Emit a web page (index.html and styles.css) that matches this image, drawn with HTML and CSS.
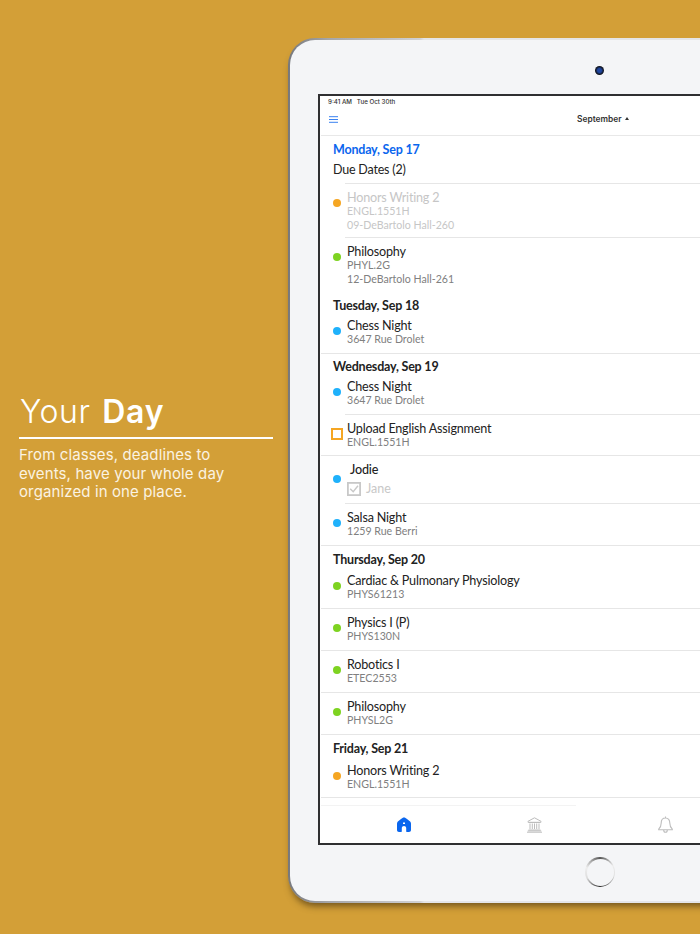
FILE: index.html
```html
<!DOCTYPE html>
<html lang="en">
<head>
<meta charset="utf-8">
<title>Your Day</title>
<link rel="stylesheet" href="styles.css">
</head>
<body>
<main class="page">
  <section class="promo">
    <h1 class="promo-title">Your <b>Day</b></h1>
    <p class="promo-text">From classes, deadlines to events, have your whole day organized in one place.</p>
  </section>
  <section class="tablet">
    <div class="bezel">
      <div class="camera-row"><span class="camera"></span></div>
      <div class="screen">
        <div class="status">9:41 AM&nbsp;&nbsp; Tue Oct 30th</div>
        <header class="nav">
          <svg class="menu" width="9" height="7" viewBox="0 0 9 7"><path d="M0 .7h9M0 3.500h9M0 6.300h9" stroke="#3b82f0" stroke-width="1"/></svg>
          <span class="month">September <i class="caret"></i></span>
        </header>
        <div class="list">
          <h2 class="day today">Monday, Sep 17</h2>
          <div class="due">Due Dates (2)</div>
          <div class="row tall muted"><span class="dot orange"></span><div class="info rule"><div class="title">Honors Writing 2</div><div class="sub">ENGL.1551H</div><div class="sub">09-DeBartolo Hall-260</div></div></div>
          <div class="row tall"><span class="dot green"></span><div class="info"><div class="title">Philosophy</div><div class="sub">PHYL.2G</div><div class="sub">12-DeBartolo Hall-261</div></div></div>
          <h2 class="day day-short">Tuesday, Sep 18</h2>
          <div class="row full"><span class="dot blue"></span><div class="info"><div class="title">Chess Night</div><div class="sub">3647 Rue Drolet</div></div></div>
          <h2 class="day day-tight">Wednesday, Sep 19</h2>
          <div class="row"><span class="dot blue"></span><div class="info rule"><div class="title">Chess Night</div><div class="sub">3647 Rue Drolet</div></div></div>
          <div class="row short full"><span class="box"></span><div class="info"><div class="title">Upload English Assignment</div><div class="sub">ENGL.1551H</div></div></div>
          <div class="row jodie"><span class="dot blue dot-low"></span><div class="info rule"><div class="title name">Jodie</div><div class="check-line">
            <svg width="14" height="14" viewBox="0 0 14 14"><rect x=".9" y=".9" width="12.200" height="12.200" fill="none" stroke="#c8c8c8" stroke-width="1.800"/><path d="M3.200 6.800l3 3 4.800-6" fill="none" stroke="#c8c8c8" stroke-width="1.400"/></svg>
            <span>Jane</span></div></div></div>
          <div class="row full"><span class="dot blue"></span><div class="info"><div class="title">Salsa Night</div><div class="sub">1259 Rue Berri</div></div></div>
          <h2 class="day">Thursday, Sep 20</h2>
          <div class="row full"><span class="dot green"></span><div class="info"><div class="title">Cardiac &amp; Pulmonary Physiology</div><div class="sub">PHYS61213</div></div></div>
          <div class="row full"><span class="dot green"></span><div class="info"><div class="title">Physics I (P)</div><div class="sub">PHYS130N</div></div></div>
          <div class="row full"><span class="dot green"></span><div class="info"><div class="title">Robotics I</div><div class="sub">ETEC2553</div></div></div>
          <div class="row full"><span class="dot green"></span><div class="info"><div class="title">Philosophy</div><div class="sub">PHYSL2G</div></div></div>
          <h2 class="day day-tall">Friday, Sep 21</h2>
          <div class="row short full"><span class="dot orange"></span><div class="info"><div class="title">Honors Writing 2</div><div class="sub">ENGL.1551H</div></div></div>
          <div class="faint"></div>
        </div>
        <nav class="tabs">
          <span class="tab"><svg width="14" height="15" viewBox="0 0 14 15"><path fill="#0a66ee" fill-rule="evenodd" d="M7 .5C8 .5 9 1.200 10 2l2.500 2c1 .8 1.500 1.600 1.500 3v6c0 1.200-.8 2-2 2h-2c-.6 0-.8-.4-.8-1v-3c0-1.200-1-2-2.200-2s-2.200.8-2.200 2v3c0 .6-.2 1-.8 1H2c-1.200 0-2-.8-2-2V7c0-1.400.5-2.200 1.500-3L4 2C5 1.200 6 .5 7 .5zM6 5.500h2V7H6z"/></svg></span>
          <span class="tab"><svg width="17" height="16" viewBox="0 0 17 16"><g fill="none" stroke="#bdbdbd" stroke-width="1"><path d="M8.500.8L15 4.300v1H2v-1zM3 5.500h11M2.500 13h12M1 15.200h15M1.800 13.900h13.400M4 6.500V12M6.300 6.500V12M8.500 6.500V12M10.700 6.500V12M13 6.500V12"/></g></svg></span>
          <span class="tab"><svg width="15" height="17" viewBox="0 0 15 17"><g fill="none" stroke="#bdbdbd" stroke-width="1.100"><path d="M7.500 2C4.700 2 3.200 4 3.200 7c0 3-.8 4.500-2.500 6.200v.6h13.600v-.6C12.600 11.500 11.800 10 11.800 7c0-3-1.500-5-4.300-5zM7.500 2V.5M5.700 14c0 1.500.8 2.300 1.800 2.300s1.800-.8 1.800-2.300"/></g></svg></span>
        </nav>
      </div>
      <div class="home-row"><span class="home"></span></div>
    </div>
  </section>
</main>
</body>
</html>
```
FILE: styles.css
```css
* { box-sizing: border-box; }
html, body { margin: 0; padding: 0; }
body { width: 700px; height: 934px; overflow: hidden; background: #d39f37; }
.page { display: flex; width: 700px; height: 934px; overflow: hidden; }

.promo { flex: 0 0 288px; padding: 393px 15px 0 19px; color: #fff; font-family: Inter, sans-serif; }
.promo-title { margin: 0; padding: 0 0 6px 1px; border-bottom: 2px solid #fff; font-size: 32px; line-height: 38px; font-weight: 300; letter-spacing: .6px; word-spacing: 2px; }
.promo-title b { font-weight: 600; letter-spacing: .8px; }
.promo-text { max-width: 212px; margin: 7px 0 0; font-size: 15px; line-height: 18.500px; font-weight: 400; color: #fbf3e2; letter-spacing: .12px; }

.tablet { flex: 0 0 520px; height: 865px; margin-top: 38px; padding: 2px 0 2px 2px; border-radius: 27px 0 0 27px; background: linear-gradient(90deg, #77787c 0, #a5a6a9 40px, #d0d1d4 132px, #e4e5e8 136px); box-shadow: 0 6px 7px -3px rgba(70, 50, 15, .7); }
.bezel { height: 100%; background: #f4f5f7; border-radius: 25px 0 0 25px; display: flex; flex-direction: column; }
.camera-row { height: 54px; padding: 26px 0 0 305px; }
.camera { display: block; width: 9px; height: 9px; border-radius: 50%; background: radial-gradient(circle, #1f46a0 0 30%, #10141f 62%); }
.screen { height: 751px; margin-left: 28px; border: 2px solid #2f2f31; border-right: 0; background: #fff; display: flex; flex-direction: column; font-family: Lato, sans-serif; color: #222; }
.status { height: 11px; padding: 1px 0 0 8px; font: 500 6.200px/10px Inter, sans-serif; color: #333; }
.nav { height: 29px; flex: none; margin-left: 1px; border-bottom: 1px solid #e8e8e8; padding-left: 8px; display: flex; align-items: center; gap: 239px; }
.menu { margin-top: -4px; }
.month { margin-top: -4px; font: 600 8.400px/12px Inter, sans-serif; color: #333; }
.caret { display: inline-block; width: 0; height: 0; border: 2.500px solid transparent; border-top: 0; border-bottom: 3px solid #333; vertical-align: 2px; margin-left: 1px; }

.list { flex: none; height: 670px; margin-left: 1px; overflow: hidden; }
.day { margin: 0; height: 21px; padding: 6px 0 0 12px; font-size: 12.500px; line-height: 16px; font-weight: 700; letter-spacing: -.2px; color: #222; }
.day-short { height: 20px; }
.day-tight { height: 19px; padding-top: 5px; }
.day-tall { height: 22px; }
.today { height: 23px; color: #0a66ee; }
.due { height: 25px; padding: 3px 0 0 12px; font-size: 12.500px; line-height: 16px; letter-spacing: -.2px; color: #222; background: linear-gradient(#e6e6e6, #e6e6e6) 24px 100% / 100% 1px no-repeat; }
.row { display: flex; height: 42px; padding-left: 12px; gap: 4px; }
.row.tall { height: 54px; }
.row.jodie { height: 48px; }
.row.short { height: 41px; }
.row.full { border-bottom: 1px solid #e6e6e6; }
.info { flex: 1; min-width: 0; padding: 6px 0 0 2px; }
.info.rule { border-bottom: 1px solid #e6e6e6; }
.dot { flex: none; width: 8px; height: 8px; margin-top: 15px; border-radius: 50%; }
.dot-low { margin-top: 19px; }
.green { background: #7ed321; }
.orange { background: #f5a623; }
.blue { background: #1fb1fb; }
.box { flex: none; width: 12px; height: 12px; margin: 13px -2px 0 -2px; border: 2px solid #f5a623; }
.title { font-size: 12.600px; line-height: 15px; letter-spacing: -.2px; color: #222; }
.sub { font-size: 10.600px; line-height: 13.500px; color: #808080; }
.muted .title, .muted .sub { color: #c6c6c6; }
.name { font-weight: 500; margin-left: 3px; }
.check-line { display: flex; align-items: center; gap: 5px; margin-top: 4px; font-size: 12.500px; line-height: 15px; color: #c8c8c8; }
.faint { height: 1px; width: 255px; margin-top: 7px; background: #f3f3f3; }
.tabs { flex: none; height: 37px; padding: 0 0 0 18.750px; display: flex; align-items: center; background: #fff; }
.tab { flex: 0 0 130.500px; display: flex; justify-content: center; }
.home-row { height: 56px; padding: 12px 0 0 295px; }
.home { display: block; width: 30px; height: 30px; padding: 1.500px; border-radius: 50%; background: conic-gradient(#555, #eee 18%, #ddd 30%, #222 50%, #ddd 68%, #eee 80%, #555); }
.home::after { content: ""; display: block; width: 100%; height: 100%; border-radius: 50%; background: #f4f5f7; }
```
